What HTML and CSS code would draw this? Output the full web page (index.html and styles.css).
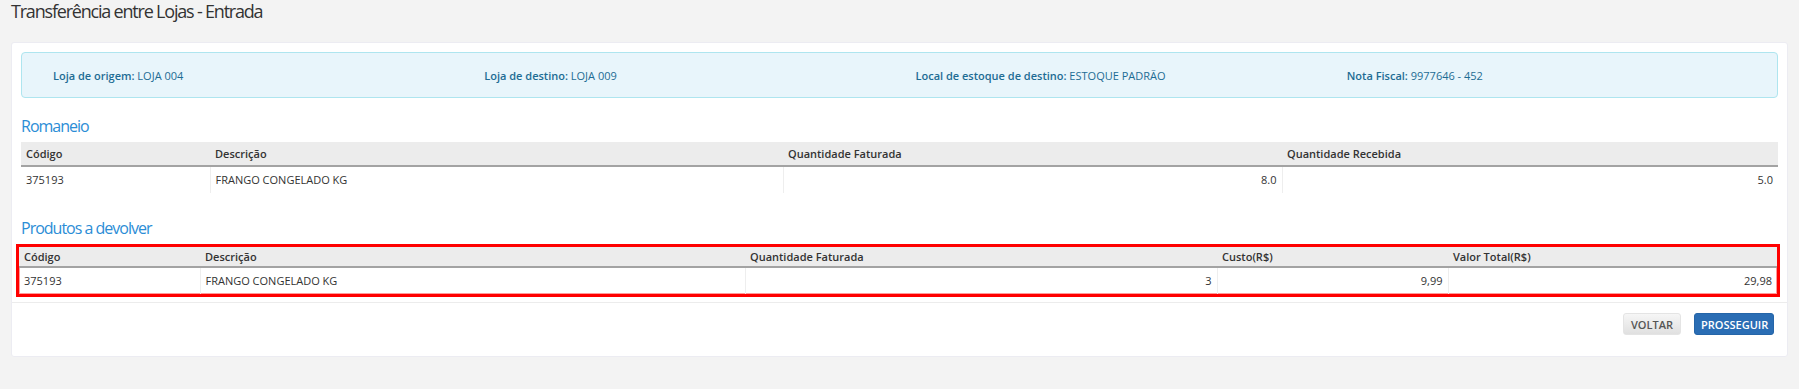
FILE: index.html
```html
<!DOCTYPE html>
<html>
<head>
    <title>Transferência entre Lojas - Entrada</title>
    <link rel="stylesheet" href="styles.css">
</head>
<body>
    <h1 class="page-title">Transferência entre Lojas - Entrada</h1>

    <div class="panel">
        <div class="panel-body">
            <div class="info-box">
                <div class="info-item"><b>Loja de origem:</b> LOJA 004</div>
                <div class="info-item"><b>Loja de destino:</b> LOJA 009</div>
                <div class="info-item"><b>Local de estoque de destino:</b> ESTOQUE PADRÃO</div>
                <div class="info-item"><b>Nota Fiscal:</b> 9977646 - 452</div>
            </div>

            <h2 class="section-title">Romaneio</h2>
            <table class="grid">
                <colgroup>
                    <col class="col-cod">
                    <col class="col-desc">
                    <col class="col-qtd">
                    <col>
                </colgroup>
                <thead>
                    <tr>
                        <th>Código</th>
                        <th>Descrição</th>
                        <th>Quantidade Faturada</th>
                        <th>Quantidade Recebida</th>
                    </tr>
                </thead>
                <tbody>
                    <tr>
                        <td>375193</td>
                        <td>FRANGO CONGELADO KG</td>
                        <td class="num">8.0</td>
                        <td class="num">5.0</td>
                    </tr>
                </tbody>
            </table>

            <h2 class="section-title section-title-next">Produtos a devolver</h2>
            <div class="highlight">
                <table class="grid">
                    <colgroup>
                        <col class="col-cod2">
                        <col class="col-desc2">
                        <col class="col-qtd2">
                        <col class="col-custo">
                        <col>
                    </colgroup>
                    <thead>
                        <tr>
                            <th>Código</th>
                            <th>Descrição</th>
                            <th>Quantidade Faturada</th>
                            <th>Custo(R$)</th>
                            <th>Valor Total(R$)</th>
                        </tr>
                    </thead>
                    <tbody>
                        <tr>
                            <td>375193</td>
                            <td>FRANGO CONGELADO KG</td>
                            <td class="num">3</td>
                            <td class="num">9,99</td>
                            <td class="num">29,98</td>
                        </tr>
                    </tbody>
                </table>
            </div>
        </div>

        <div class="panel-footer">
            <button class="btn btn-default">VOLTAR</button>
            <button class="btn btn-primary">PROSSEGUIR</button>
        </div>
    </div>
</body>
</html>
```

FILE: styles.css
```css
body {
    margin: 0;
    padding: 0 11px;
    background-color: #f3f3f3;
    font-family: "Open Sans", "Noto Sans", sans-serif;
    color: #333;
}

.page-title {
    margin: 0 0 20px 0;
    font-size: 18px;
    font-weight: 400;
    line-height: 22px;
    letter-spacing: -1.2px;
    color: #333;
}

.panel {
    background-color: #fff;
    border: 1px solid #ececf2;
    border-radius: 3px;
}

.panel-body {
    padding: 9px 9px 5px 9px;
}

.info-box {
    display: grid;
    grid-template-columns: repeat(4, 1fr);
    padding: 15px 15px 13px 15px;
    background-color: #e8f5fb;
    border: 1px solid #aee5ef;
    border-radius: 4px;
    font-size: 11px;
    line-height: 16px;
    color: #1d6c94;
}

.info-item {
    padding-left: 16px;
}

.info-item b {
    font-weight: 600;
}

.section-title {
    margin: 18px 0 6px 0;
    font-size: 16px;
    font-weight: 400;
    line-height: 20px;
    letter-spacing: -1px;
    color: #2b8dd6;
}

.section-title-next {
    margin-top: 25px;
}

.grid {
    width: 100%;
    border-collapse: collapse;
    table-layout: fixed;
    font-size: 11px;
    color: #333;
}

.grid th {
    padding: 4px 5px;
    line-height: 15px;
    text-align: left;
    font-weight: 600;
    background-color: #ececec;
    border-bottom: 2px solid #a3a3a3;
}

.grid td {
    padding: 5px;
    line-height: 16px;
    border-left: 1px solid #eee;
}

.grid td:first-child {
    border-left: 0;
}

.grid .num {
    text-align: right;
}

.col-cod { width: 189px; }
.col-desc { width: 573px; }
.col-qtd { width: 499px; }

/* red frame around the products table */
.highlight {
    margin: 5px -2px 0 -5px;
    border: 3px solid #f00;
    box-shadow: inset 0 0 0 1px #ff9a9a;
}

.highlight .grid th {
    padding: 2px 5px;
}

.col-cod2 { width: 181px; }
.col-desc2 { width: 545px; }
.col-qtd2 { width: 472px; }
.col-custo { width: 231px; }

.panel-footer {
    display: flex;
    justify-content: flex-end;
    gap: 13px;
    padding: 10px 13px 21px 10px;
    border-top: 1px solid #ececec;
}

.btn {
    height: 22px;
    padding: 0 6px;
    font-family: inherit;
    font-size: 11px;
    font-weight: 600;
    border-radius: 3px;
    border: 1px solid transparent;
}

.btn-default {
    width: 58px;
    color: #555;
    background: linear-gradient(#f6f6f6, #e0e0e0);
    border-color: #e4e4e4;
}

.btn-primary {
    width: 80px;
    color: #fff;
    background-color: #2a6db4;
    border-color: #2565a8;
}
```
